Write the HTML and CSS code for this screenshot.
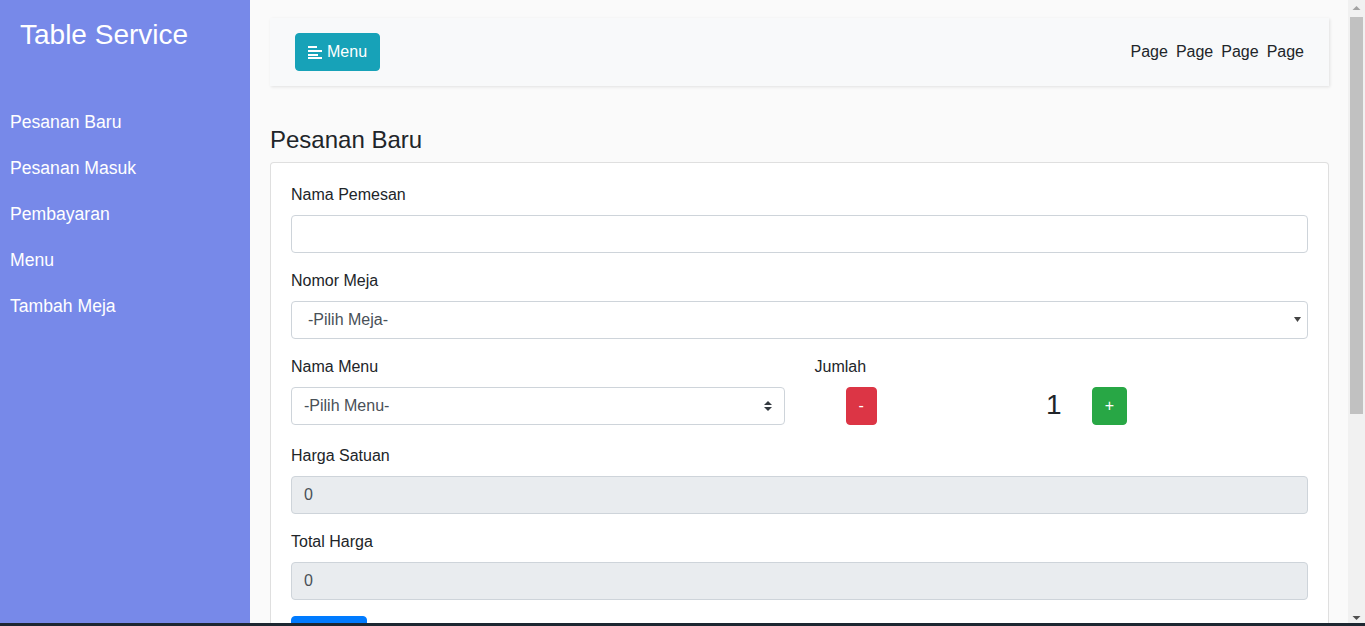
FILE: index.html
```html
<!DOCTYPE html>
<html lang="id">
<head>
<meta charset="utf-8">
<title>Table Service</title>
<link rel="stylesheet" href="styles.css">
</head>
<body>
<div class="wrapper">
  <nav class="sidebar">
    <div class="sidebar-header"><h3>Table Service</h3></div>
    <ul class="side-menu">
      <li><a href="#">Pesanan Baru</a></li>
      <li><a href="#">Pesanan Masuk</a></li>
      <li><a href="#">Pembayaran</a></li>
      <li><a href="#">Menu</a></li>
      <li><a href="#">Tambah Meja</a></li>
    </ul>
  </nav>
  <main class="content">
    <div class="topbar">
      <button class="btn btn-info" type="button">
        <svg class="ico" width="14" height="14" viewBox="0 0 14 14"><rect x="0" y="1" width="9" height="2" fill="#fff"/><rect x="0" y="5" width="14" height="2" fill="#fff"/><rect x="0" y="9" width="10" height="2" fill="#fff"/><rect x="0" y="12" width="14" height="2" fill="#fff"/></svg>
        <span>Menu</span>
      </button>
      <ul class="top-links">
        <li><a href="#">Page</a></li>
        <li><a href="#">Page</a></li>
        <li><a href="#">Page</a></li>
        <li><a href="#">Page</a></li>
      </ul>
    </div>
    <h4 class="page-title">Pesanan Baru</h4>
    <div class="card">
      <div class="card-body">
        <div class="form-group">
          <label>Nama Pemesan</label>
          <input class="form-control" type="text">
        </div>
        <div class="form-group">
          <label>Nomor Meja</label>
          <div class="select-wrap">
            <select class="form-control native"><option>-Pilih Meja-</option></select>
            <svg class="arrow-native" width="7" height="5" viewBox="0 0 7 5"><path d="M0 0h7L3.5 5z" fill="#444"/></svg>
          </div>
        </div>
        <div class="row">
          <div class="col">
            <label>Nama Menu</label>
            <div class="select-wrap">
              <select class="form-control custom"><option>-Pilih Menu-</option></select>
              <svg class="arrow-custom" width="8" height="10" viewBox="0 0 4 5"><path d="M2 0L0 2h4zm0 5L0 3h4z" fill="#343a40"/></svg>
            </div>
          </div>
          <div class="col">
            <label>Jumlah</label>
            <div class="qty">
              <button class="btn btn-danger btn-minus" type="button">-</button>
              <span class="qty-num">1</span>
              <button class="btn btn-success btn-plus" type="button">+</button>
            </div>
          </div>
        </div>
        <div class="form-group">
          <label>Harga Satuan</label>
          <input class="form-control" type="text" value="0" readonly>
        </div>
        <div class="form-group">
          <label>Total Harga</label>
          <input class="form-control" type="text" value="0" readonly>
        </div>
        <button class="btn btn-primary" type="button">Submit</button>
      </div>
    </div>
  </main>
</div>
<div class="scrollbar" aria-hidden="true">
  <svg class="sb-arrow" width="17" height="17" viewBox="0 0 17 17"><path d="M4.5 10h8L8.5 6z" fill="#a3a3a3"/></svg>
  <div class="sb-track"><div class="sb-thumb"></div></div>
  <svg class="sb-arrow" width="17" height="17" viewBox="0 0 17 17"><path d="M4.5 7h8L8.5 11z" fill="#505050"/></svg>
</div>
<div class="taskbar"></div>
</body>
</html>
```
FILE: styles.css
```css
* { box-sizing: border-box; }
html, body { margin: 0; padding: 0; }
body {
  font-family: "Liberation Sans", Arial, sans-serif;
  font-size: 16px;
  line-height: 1.5;
  color: #212529;
  background: #fafafa;
}
.wrapper { display: flex; align-items: stretch; min-height: 936px; margin-right: 17px; }
.sidebar {
  width: 250px;
  flex: 0 0 250px;
  background: #7789e9;
  color: #fff;
}
.sidebar-header { padding: 18px 20px 20px; }
.sidebar-header h3 {
  margin: 0 0 8px;
  font-size: 28px;
  font-weight: 400;
  line-height: 1.2;
}
.side-menu { list-style: none; margin: 0; padding: 19px 0 0; }
.side-menu a {
  display: block;
  padding: 10px;
  font-size: 17.6px;
  line-height: 26px;
  color: #fff;
  text-decoration: none;
}
.content { flex: 1; padding: 18px 19px 20px 20px; min-width: 0; }
.topbar {
  display: flex;
  align-items: center;
  justify-content: space-between;
  background: #f8f9fa;
  padding: 15px 25px;
  box-shadow: 1px 1px 3px rgba(0,0,0,0.1);
  margin-bottom: 40px;
}
.top-links { list-style: none; margin: 0; padding: 0; display: flex; gap: 8px; }
.top-links a { color: #212529; text-decoration: none; }
.btn {
  display: inline-flex;
  align-items: center;
  justify-content: center;
  font-family: inherit;
  font-size: 16px;
  line-height: 24px;
  padding: 6px 12px;
  border: 1px solid transparent;
  border-radius: 4px;
  color: #fff;
  cursor: pointer;
}
.btn-info { background: #17a2b8; border-color: #17a2b8; gap: 5px; }
.btn-info .ico { display: block; }
.btn-danger { background: #dc3545; border-color: #dc3545; }
.btn-success { background: #28a745; border-color: #28a745; }
.btn-primary { background: #007bff; border-color: #007bff; }
.page-title {
  margin: 0 0 7px;
  font-size: 24px;
  font-weight: 400;
  line-height: 1.2;
}
.card {
  background: #fff;
  border: 1px solid rgba(0,0,0,0.125);
  border-radius: 4px;
}
.card-body { padding: 20px; }
.form-group { margin-bottom: 16px; }
label { display: block; margin-bottom: 8px; }
.form-control {
  display: block;
  width: 100%;
  height: 38px;
  padding: 6px 12px;
  font-family: inherit;
  font-size: 16px;
  line-height: 24px;
  color: #495057;
  background: #fff;
  border: 1px solid #ced4da;
  border-radius: 4px;
  outline: none;
}
input.form-control[readonly] { background: #e9ecef; }
select.form-control { appearance: none; -webkit-appearance: none; }
select.native { padding-left: 16px; }
.select-wrap { position: relative; }
.arrow-native { position: absolute; right: 7px; top: 16px; }
.arrow-custom { position: absolute; right: 13px; top: 14px; }
.row { display: flex; gap: 30px; margin-bottom: 19px; }
.col { flex: 1; min-width: 0; }
.qty { display: flex; align-items: center; height: 38px; padding-left: 31px; }
.qty-num {
  width: 30px;
  margin-left: 162px;
  margin-right: 23px;
  text-align: center;
  font-size: 28px;
  line-height: 36px;
  align-self: flex-start;
}
.scrollbar {
  position: fixed;
  top: 0; right: 0; bottom: 0;
  width: 17px;
  display: flex;
  flex-direction: column;
  background: #f1f1f1;
}
.sb-arrow { display: block; flex: 0 0 17px; }
.sb-track { flex: 1; padding: 0 2px; }
.sb-thumb { height: 397px; background: #c1c1c1; }
.taskbar {
  position: fixed;
  left: 0; right: 0; bottom: 0;
  height: 3px;
  background: #1d2731;
}
```
